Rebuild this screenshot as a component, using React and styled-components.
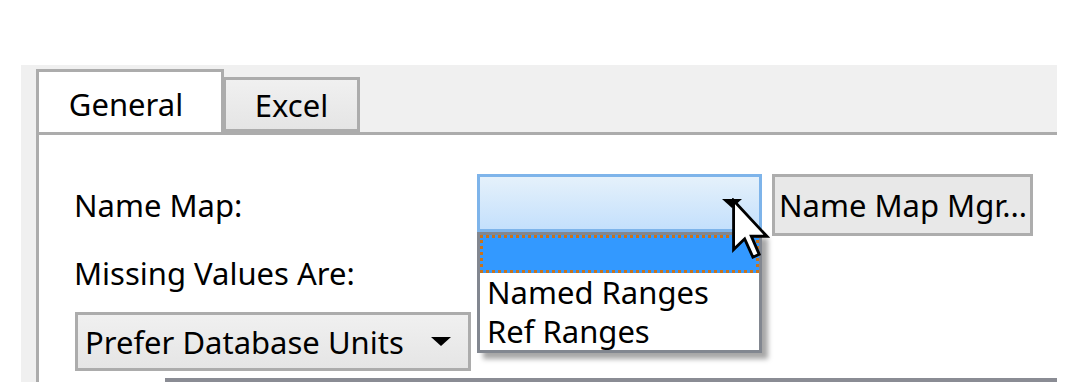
import React from 'react'
import styled, { createGlobalStyle } from 'styled-components'

const GlobalStyle = createGlobalStyle`
  html, body { margin: 0; padding: 0; background: #fff; }
  body { font-family: "Noto Sans", "Open Sans", sans-serif; color: #000; }
  * { box-sizing: border-box; }
`

const Page = styled.div`
  width: 1084px;
  height: 385px;
  padding-top: 65px;
  padding-left: 21px;
  overflow: hidden;
`

const Dialog = styled.div`
  width: 1036px;
  height: 317px;
  background: #f0f0f0;
  padding: 7px 0 0 15px;
  display: flex;
  flex-direction: column;
`

const TabStrip = styled.div`
  display: flex;
  align-items: flex-end;
  height: 60px;
  position: relative;
  z-index: 1;
`

const Tab = styled.div`
  height: ${p => (p.$active ? '63px' : '55px')};
  width: ${p => p.$w}px;
  margin-left: ${p => (p.$active ? 0 : -1)}px;
  margin-bottom: ${p => (p.$active ? '-3px' : 0)}px;
  border: 3px solid #acacac;
  border-bottom: ${p => (p.$active ? 'none' : '3px solid #acacac')};
  background: ${p => (p.$active ? '#fff' : 'linear-gradient(#f0f0f0, #e5e5e5)')};
  font-size: 31px;
  display: flex;
  justify-content: center;
  padding-top: ${p => (p.$active ? '12px' : '5px')};
  padding-right: ${p => (p.$active ? '8px' : 0)};
  line-height: 40px;
`

const Content = styled.div`
  flex: 1;
  background: #fff;
  border-left: 3px solid #acacac;
  border-top: 3px solid #acacac;
  padding: 39px 0 0 35px;
  position: relative;
`

const Row = styled.div`
  display: flex;
  align-items: flex-start;
`

const Label = styled.div`
  font-size: 31px;
  line-height: 40px;
  width: ${p => p.$w || 'auto'};
  margin-top: ${p => p.$mt || 0};
`

const ComboWrap = styled.div`
  position: relative;
  width: 285px;
  height: 58px;
`

const Combo = styled.div`
  width: ${p => p.$w || '100%'};
  height: ${p => p.$h || '100%'};
  border: 3px solid ${p => (p.$hot ? '#7eb4ea' : '#acacac')};
  background: ${p =>
    p.$hot ? 'linear-gradient(#e5f1fb, #c4e0fc)' : 'linear-gradient(#f0f0f0, #e5e5e5)'};
  display: flex;
  align-items: center;
  justify-content: space-between;
  padding: 0 17px 0 7px;
  font-size: 31px;
  margin-top: ${p => p.$mt || 0};
  margin-left: ${p => p.$ml || 0};
`

const Arrow = styled.span`
  width: 0;
  height: 0;
  border-left: 10px solid transparent;
  border-right: 10px solid transparent;
  border-top: 9px solid #000;
  margin-left: auto;
`

const Button = styled.div`
  width: 261px;
  height: 62px;
  margin-left: 10px;
  border: 3px solid #adadad;
  background: #e8e8e8;
  font-size: 31px;
  display: flex;
  align-items: center;
  padding-left: 4px;
  white-space: nowrap;
`

const DropList = styled.div`
  position: absolute;
  top: 100%;
  left: 0;
  width: 285px;
  height: 121px;
  background: #fff;
  border: 3px solid #828790;
  box-shadow: 6px 6px 5px rgba(0, 0, 0, 0.35);
  overflow: hidden;
  z-index: 2;
`

const Item = styled.div`
  height: ${p => (p.$selected ? '38px' : '39px')};
  font-size: 31px;
  line-height: 39px;
  padding-left: 7px;
  background: ${p => (p.$selected ? '#3399ff' : 'transparent')};
  border: ${p => (p.$selected ? '3px dotted #c8731c' : 'none')};
  white-space: nowrap;
`

const Cursor = styled.svg`
  position: absolute;
  left: 255px;
  top: 24px;
  z-index: 3;
`

const BottomBar = styled.div`
  position: absolute;
  left: 126px;
  right: 0;
  bottom: 0;
  height: 4px;
  background: #8a8c94;
`

export default function App() {
  return (
    <Page>
      <GlobalStyle />
      <Dialog>
        <TabStrip>
          <Tab $active $w={188}>General</Tab>
          <Tab $w={137}>Excel</Tab>
        </TabStrip>
        <Content>
          <Row>
            <Label $w="403px" $mt="11px">Name Map:</Label>
            <ComboWrap>
              <Combo $hot>
                <Arrow />
              </Combo>
              <DropList>
                <Item $selected />
                <Item>Named Ranges</Item>
                <Item>Ref Ranges</Item>
              </DropList>
              <Cursor width="38" height="62" viewBox="0 0 12 19">
                <path
                  d="M0.5 0.5 L0.5 16 L4 12.6 L6.6 18.4 L8.6 17.5 L6.1 11.8 L11 11.8 Z"
                  fill="#fff"
                  stroke="#000"
                  strokeWidth="0.9"
                  strokeLinejoin="miter"
                />
              </Cursor>
            </ComboWrap>
            <Button>Name Map Mgr...</Button>
          </Row>
          <Label $mt="17px">Missing Values Are:</Label>
          <Combo $w="396px" $h="59px" $mt="19px" $ml="1px">
            Prefer Database Units
            <Arrow />
          </Combo>
          <BottomBar />
        </Content>
      </Dialog>
    </Page>
  )
}
